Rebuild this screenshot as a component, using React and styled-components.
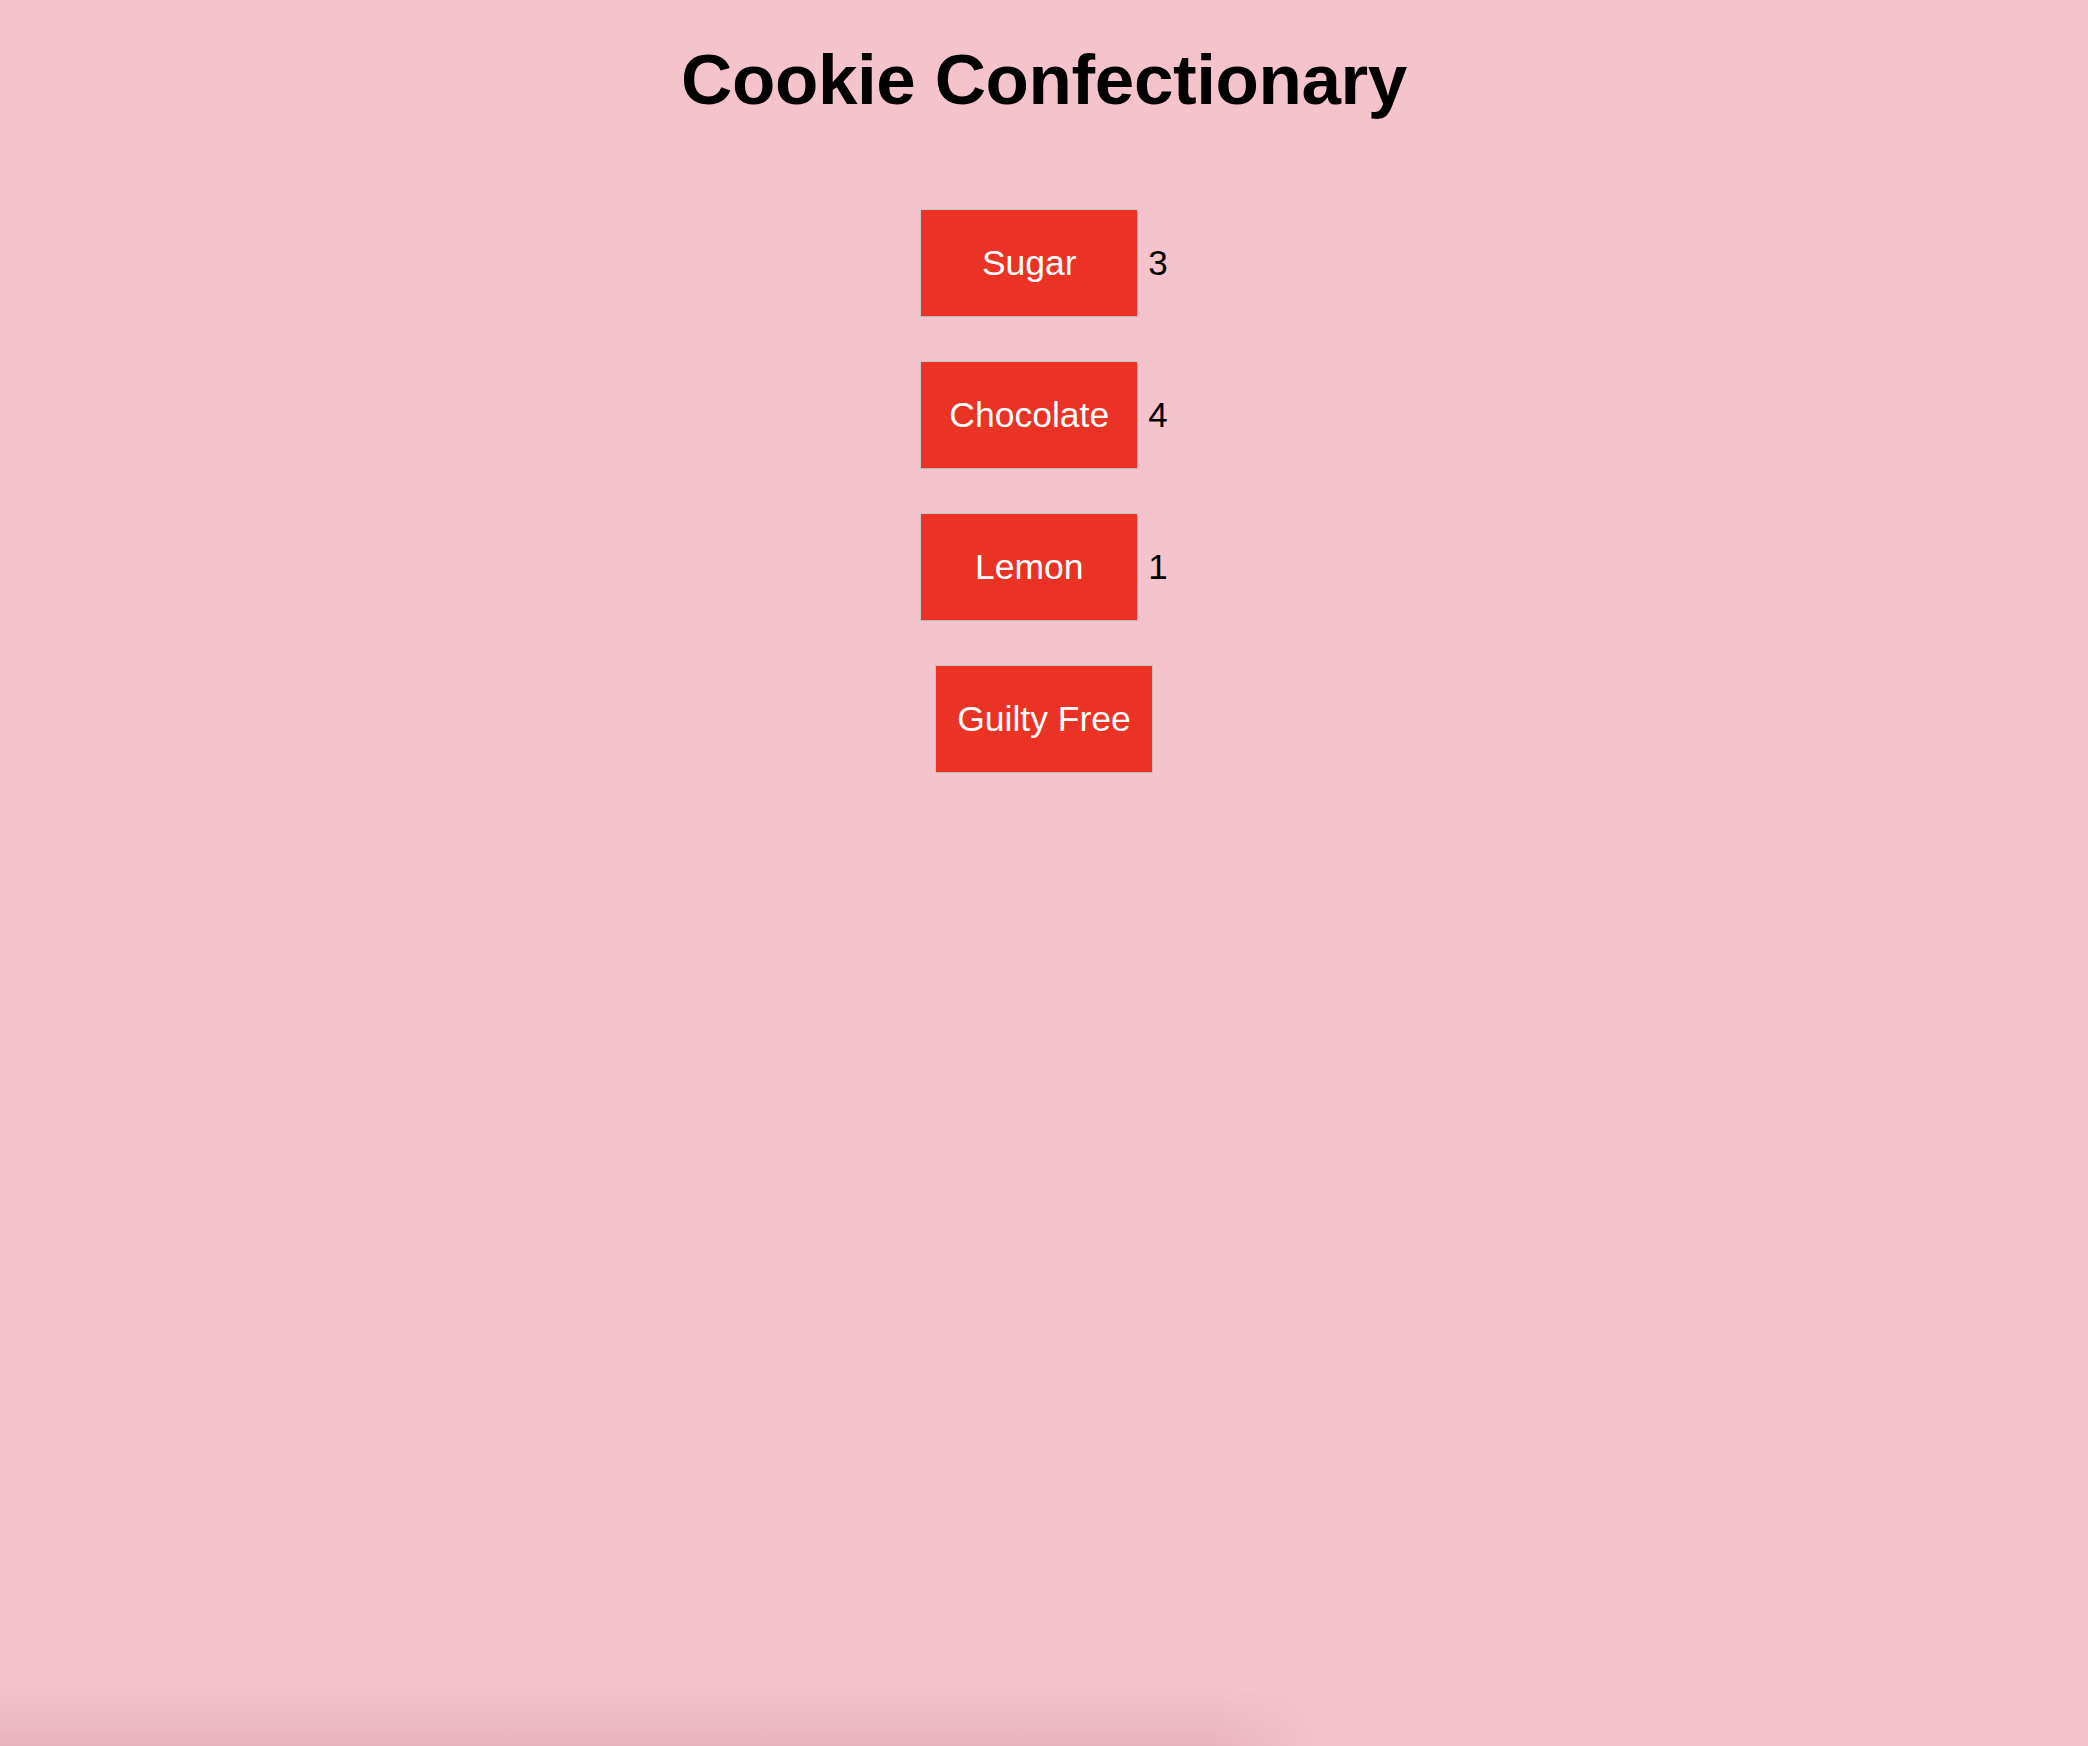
import React from "react";
import styled, { createGlobalStyle } from "styled-components";

const GlobalStyle = createGlobalStyle`
  html, body {
    margin: 0;
    padding: 0;
    background: #f5c3cb;
    min-height: 100%;
  }
  body {
    font-family: "Liberation Sans", Arial, Helvetica, sans-serif;
  }
`;

const Page = styled.div`
  min-height: 1746px;
  box-sizing: border-box;
  padding-top: 44px;
  display: flex;
  flex-direction: column;
  align-items: center;
  background: #f5c3cb;
  position: relative;
  overflow: hidden;
`;

const Title = styled.h1`
  margin: 0;
  font-family: "Liberation Sans", Arial, Helvetica, sans-serif;
  font-weight: 700;
  font-size: 71px;
  line-height: 72px;
  color: #000;
  letter-spacing: -0.4px;
`;

const List = styled.div`
  margin-top: 93px;
  display: flex;
  flex-direction: column;
  align-items: center;
  gap: 44px;
`;

const Row = styled.div`
  display: flex;
  align-items: center;
  gap: 10px;
`;

const FlavorButton = styled.button`
  width: 218px;
  height: 108px;
  box-sizing: border-box;
  margin: 0;
  padding: 0;
  display: flex;
  align-items: center;
  justify-content: center;
  background: #ea3324;
  color: #fff;
  border: 1px solid #c9c4c4;
  border-bottom-color: #bdb8b8;
  border-right-color: #c2bdbd;
  font-family: "Liberation Sans", Arial, Helvetica, sans-serif;
  font-size: 35.5px;
  cursor: pointer;
`;

const Count = styled.span`
  font-family: "Liberation Sans", Arial, Helvetica, sans-serif;
  font-size: 35px;
  color: #000;
`;

const BottomShade = styled.div`
  position: absolute;
  left: 0;
  bottom: 0;
  width: 1320px;
  height: 60px;
  pointer-events: none;
  background: linear-gradient(to bottom, rgba(160, 90, 110, 0), rgba(160, 90, 110, 0.14));
  -webkit-mask-image: linear-gradient(to right, #000 92%, transparent 100%);
  mask-image: linear-gradient(to right, #000 92%, transparent 100%);
`;

const cookies = [
  { name: "Sugar", count: 3 },
  { name: "Chocolate", count: 4 },
  { name: "Lemon", count: 1 },
];

export default function App() {
  return (
    <>
      <GlobalStyle />
      <Page>
        <Title>Cookie Confectionary</Title>
        <List>
          {cookies.map((c) => (
            <Row key={c.name}>
              <FlavorButton>{c.name}</FlavorButton>
              <Count>{c.count}</Count>
            </Row>
          ))}
          <Row>
            <FlavorButton>Guilty Free</FlavorButton>
          </Row>
        </List>
        <BottomShade />
      </Page>
    </>
  );
}
